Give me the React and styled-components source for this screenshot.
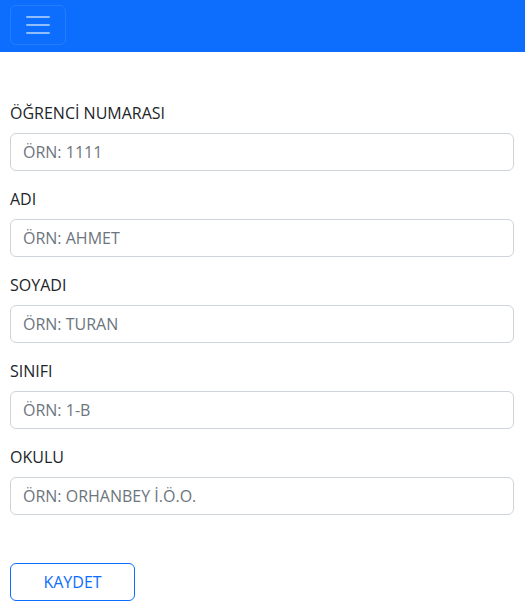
import { Fragment } from 'react'
import styled, { createGlobalStyle } from 'styled-components'

const Global = createGlobalStyle`
body {
  margin: 0;
  font-family: "Segoe UI", "Open Sans", "Noto Sans", sans-serif;
  color: #212529;
  background: #fff;
}
`
const Navbar = styled.nav`
height: 52px;
background-color: #0d6efd;
display: flex;
align-items: center;
padding: 0 10px;
`
const Toggler = styled.button`
width: 56px;
height: 40px;
border: 1px solid rgba(255,255,255,0.1);
border-radius: 6px;
background: transparent;
display: flex;
align-items: center;
justify-content: center;
padding: 0;
margin-top: -3px;
`
const Form = styled.form`
padding: 49px 11px 0 10px;
display: flex;
flex-direction: column;
`
const Label = styled.label`
font-size: 16px;
line-height: 24px;
margin-bottom: 8px;
`
const Input = styled.input`
height: 38px;
box-sizing: border-box;
border: 1px solid #ced4da;
border-radius: 6px;
padding: 6px 12px;
font-size: 16px;
font-family: inherit;
color: #212529;
margin-bottom: 16px;
&::placeholder {
  color: #6c757d;
}
`
const Button = styled.button`
margin-top: 32px;
width: 125px;
height: 38px;
border: 1px solid #0d6efd;
border-radius: 6px;
background: #fff;
color: #0d6efd;
font-size: 16px;
font-family: inherit;
`

const fields = [
  ['ÖĞRENCİ NUMARASI', 'ÖRN: 1111'],
  ['ADI', 'ÖRN: AHMET'],
  ['SOYADI', 'ÖRN: TURAN'],
  ['SINIFI', 'ÖRN: 1-B'],
  ['OKULU', 'ÖRN: ORHANBEY İ.Ö.O.'],
]

const App = () => {
  return (
    <>
      <Global />
      <Navbar>
        <Toggler type="button">
          <svg width="30" height="30" viewBox="0 0 30 30">
            <path d="M4 7h22M4 15h22M4 23h22" stroke="rgba(255,255,255,0.55)" strokeWidth="2" strokeLinecap="round" />
          </svg>
        </Toggler>
      </Navbar>
      <Form onSubmit={e => e.preventDefault()}>
        {fields.map(([label, ph]) => (
          <Fragment key={label}>
            <Label>{label}</Label>
            <Input placeholder={ph} />
          </Fragment>
        ))}
        <div>
          <Button type="submit">KAYDET</Button>
        </div>
      </Form>
    </>
  )
}

export default App
